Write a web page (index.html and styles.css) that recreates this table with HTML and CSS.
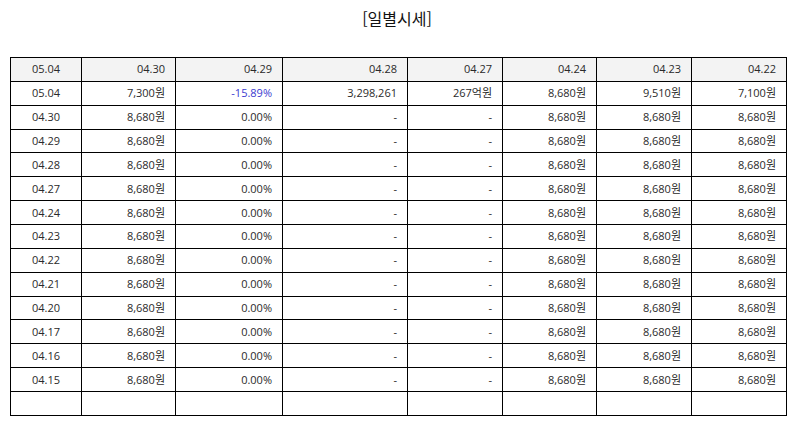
FILE: index.html
```html
<!DOCTYPE html>
<html lang="ko">
<head>
<meta charset="utf-8">
<title>일별시세</title>
<link rel="stylesheet" href="styles.css">
</head>
<body>
<div class="page">
  <h2 class="title">[일별시세]</h2>
  <table class="quotes">
    <colgroup>
      <col class="c1"><col class="c2"><col class="c3"><col class="c4">
      <col class="c5"><col class="c6"><col class="c7"><col class="c8">
    </colgroup>
    <thead>
      <tr>
        <th class="center">05.04</th><th>04.30</th><th>04.29</th><th>04.28</th>
        <th>04.27</th><th>04.24</th><th>04.23</th><th>04.22</th>
      </tr>
    </thead>
    <tbody>
      <tr><td class="center">05.04</td><td>7,300원</td><td class="down">-15.89%</td><td>3,298,261</td><td>267억원</td><td>8,680원</td><td>9,510원</td><td>7,100원</td></tr>
      <tr><td class="center">04.30</td><td>8,680원</td><td>0.00%</td><td>-</td><td>-</td><td>8,680원</td><td>8,680원</td><td>8,680원</td></tr>
      <tr><td class="center">04.29</td><td>8,680원</td><td>0.00%</td><td>-</td><td>-</td><td>8,680원</td><td>8,680원</td><td>8,680원</td></tr>
      <tr><td class="center">04.28</td><td>8,680원</td><td>0.00%</td><td>-</td><td>-</td><td>8,680원</td><td>8,680원</td><td>8,680원</td></tr>
      <tr><td class="center">04.27</td><td>8,680원</td><td>0.00%</td><td>-</td><td>-</td><td>8,680원</td><td>8,680원</td><td>8,680원</td></tr>
      <tr><td class="center">04.24</td><td>8,680원</td><td>0.00%</td><td>-</td><td>-</td><td>8,680원</td><td>8,680원</td><td>8,680원</td></tr>
      <tr><td class="center">04.23</td><td>8,680원</td><td>0.00%</td><td>-</td><td>-</td><td>8,680원</td><td>8,680원</td><td>8,680원</td></tr>
      <tr><td class="center">04.22</td><td>8,680원</td><td>0.00%</td><td>-</td><td>-</td><td>8,680원</td><td>8,680원</td><td>8,680원</td></tr>
      <tr><td class="center">04.21</td><td>8,680원</td><td>0.00%</td><td>-</td><td>-</td><td>8,680원</td><td>8,680원</td><td>8,680원</td></tr>
      <tr><td class="center">04.20</td><td>8,680원</td><td>0.00%</td><td>-</td><td>-</td><td>8,680원</td><td>8,680원</td><td>8,680원</td></tr>
      <tr><td class="center">04.17</td><td>8,680원</td><td>0.00%</td><td>-</td><td>-</td><td>8,680원</td><td>8,680원</td><td>8,680원</td></tr>
      <tr><td class="center">04.16</td><td>8,680원</td><td>0.00%</td><td>-</td><td>-</td><td>8,680원</td><td>8,680원</td><td>8,680원</td></tr>
      <tr><td class="center">04.15</td><td>8,680원</td><td>0.00%</td><td>-</td><td>-</td><td>8,680원</td><td>8,680원</td><td>8,680원</td></tr>
      <tr><td></td><td></td><td></td><td></td><td></td><td></td><td></td><td></td></tr>
    </tbody>
  </table>
</div>
</body>
</html>
```
FILE: styles.css
```css
html, body {
  margin: 0;
  padding: 0;
  background: #ffffff;
}

body {
  font-family: "Open Sans", "Noto Sans CJK KR", sans-serif;
  color: #222222;
}

.page {
  padding: 8px 10px 0 10px;
}

.title {
  margin: 0;
  height: 49px;
  font-family: "Noto Sans CJK KR", sans-serif;
  font-size: 16px;
  font-weight: normal;
  line-height: 20px;
  text-align: center;
  color: #111111;
}

.quotes {
  width: 776px;
  border-collapse: collapse;
  table-layout: fixed;
  font-size: 11px;
}

.c1 { width: 71px; }
.c2 { width: 94px; }
.c3 { width: 107px; }
.c4 { width: 125px; }
.c5 { width: 95px; }
.c6 { width: 94px; }
.c7 { width: 95px; }
.c8 { width: 95px; }

.quotes th,
.quotes td {
  border: 1px solid #000000;
  height: 23.87px;
  padding: 0 10px 0 4px;
  text-align: right;
  font-weight: normal;
  line-height: 14px;
  color: #2a2a2a;
  box-sizing: border-box;
}

.quotes th {
  background: #f3f3f3;
}

.quotes .center {
  text-align: center;
  padding: 0;
}

.quotes .down {
  color: #3a3acf;
}
```
